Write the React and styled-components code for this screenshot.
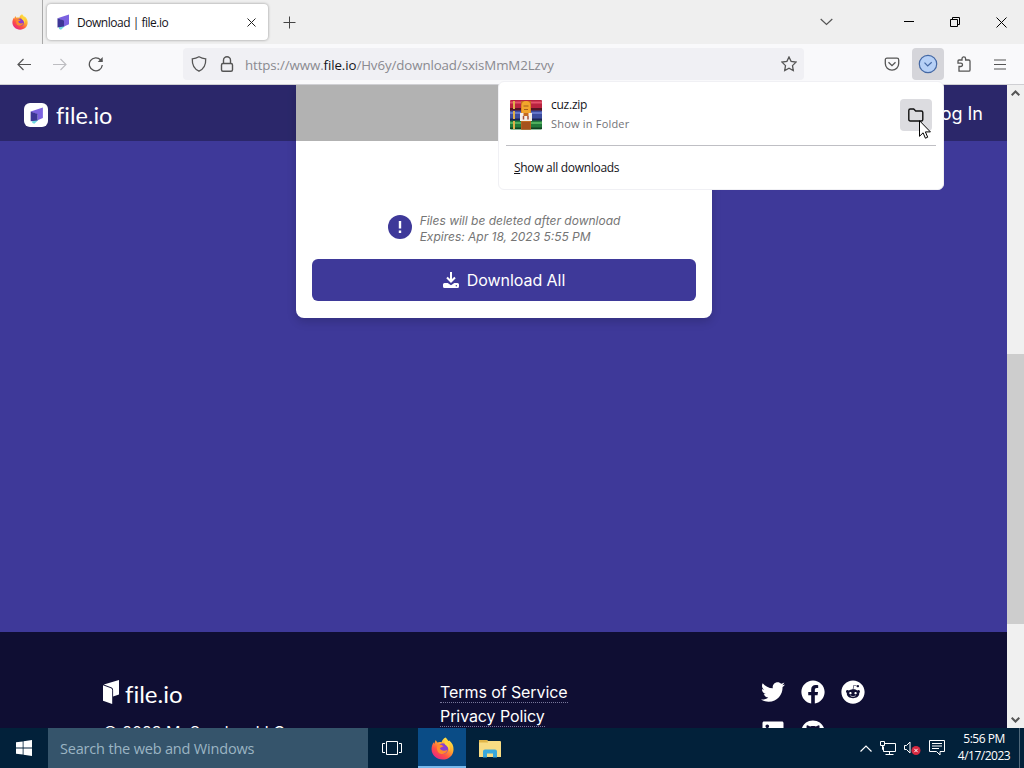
import React from 'react';
import styled, { createGlobalStyle } from 'styled-components';
import { FaTwitter, FaFacebook, FaReddit, FaLinkedin, FaGithub } from 'react-icons/fa';

function FirefoxIcon({ size }) {
  return (
    <svg width={size} height={size} viewBox="0 0 24 24">
      <defs>
        <linearGradient id="flame" x1="0.85" y1="0.05" x2="0.2" y2="0.95">
          <stop offset="0" stopColor="#fff04a" />
          <stop offset="0.4" stopColor="#ffa52f" />
          <stop offset="0.7" stopColor="#ff4f45" />
          <stop offset="1" stopColor="#e52686" />
        </linearGradient>
      </defs>
      <path
        d="M15.2 0.5c1.2 1.1 2.2 2.2 2.8 3.8l1.1-.7c3 2.6 4.6 5.6 4.4 9.6-.2 6-5 10.3-11.3 10.3C5.6 23.5.7 19 .6 12.8c0-2.8.8-5.2 2.2-7.3l.5 1.8 1.6-4.2 1.7 2.7c1.4-.6 3-.7 4.400-.2.6-2.200 2.100-4.200 4.200-5.100z"
        fill="url(#flame)"
      />
      <circle cx="12.3" cy="12.2" r="5.6" fill="#8a3fd0" />
      <path d="M7 8.2c2.200-1 4.600.1 6.200 1.600-2 .1-2.700 1.200-4 1.600 1 2.800 4.500 3.900 8 1.800-1 3.400-3.700 5-6.700 4.500C6.700 17.100 5 12.400 7 8.200z" fill="#ff8b2c" />
      <path d="M14.4 3.5c3.800 2.500 6.400 5.900 4.800 11.300-.5-3.400-2.200-5.600-4.600-7.100-.7-1.500-.7-2.800-.2-4.200z" fill="#ffd63d" />
    </svg>
  );
}

function FileIoMark({ size }) {
  return (
    <svg width={size} height={size} viewBox="0 0 16 16">
      <path d="M4 11l6 1-4 3.800L4 15z" fill="#6fd8df" />
      <path d="M2.500 4.200 14 .5v9.800l-5 2.200V7z" fill="#7b62e0" />
      <path d="M2.500 4.200 9 6.600v6L2.500 13.500z" fill="#3d3696" />
    </svg>
  );
}

function WinrarIcon() {
  return (
    <svg width="32" height="30" viewBox="0 0 32 30">
      <rect y="0" width="32" height="9.5" rx="1" fill="#b92340" />
      <rect y="1.5" width="32" height="2" fill="#e4526a" />
      <rect y="8" width="32" height="3" fill="#571523" />
      <rect y="10.5" width="32" height="9" rx="1" fill="#3c4c9e" />
      <rect y="12" width="32" height="2" fill="#6475c9" />
      <rect y="18.5" width="32" height="2.5" fill="#1c2453" />
      <rect y="20.5" width="32" height="9" rx="1" fill="#217a3a" />
      <rect y="22" width="32" height="2" fill="#4fae5c" />
      <rect y="27.5" width="32" height="1.5" fill="#113f20" />
      <path d="M3 1h2v8H3zM3 11h2v8H3zM3 21h2v8H3z" fill="#e0b04a" />
      <path d="M11 1h10v28.500h-10z" fill="#c46a20" />
      <path d="M11.500 13V5.500q0-4.500 4.500-4.500t4.500 4.500V13z" fill="#f2a52c" />
      <path d="M13.500 6h5M14 9.500h4" stroke="#a35c1a" strokeWidth="1" />
      <path d="M10 13h3.500v3h5v-3H22v8H10z" fill="#f5f0ea" />
      <path d="M13.500 16v3.500M18 16v3.500" stroke="#a8503a" strokeWidth="1.500" />
      <rect x="11.5" y="22" width="9" height="7.5" fill="#a5521d" />
    </svg>
  );
}

function App() {
  return (
    <Screen>
      <GlobalStyle />
      <TabBar>
        <PinnedTab>
          <FirefoxIcon size={16} />
        </PinnedTab>
        <Tab>
          <FileIoMark size={16} />
          <TabTitle>Download | file.io</TabTitle>
          <Line width="9" height="9" viewBox="0 0 9 9" $color="#222">
            <path d="M.5.5l8 8M8.500.5l-8 8" />
          </Line>
        </Tab>
        <NewTab>
          <Line width="13" height="13" viewBox="0 0 13 13" $color="#444">
            <path d="M6.500.5v12M.5 6.500h12" />
          </Line>
        </NewTab>
        <WindowControls>
          <Line width="13" height="8" viewBox="0 0 13 8" $color="#555" $stroke={1.2}>
            <path d="M.7 1l5.800 5.500L12.300 1" />
          </Line>
          <Line width="10" height="10" viewBox="0 0 10 10" $color="#000">
            <path d="M0 4.500h10" />
          </Line>
          <Line width="10" height="10" viewBox="0 0 10 10" $color="#000">
            <path d="M.5 2.500h7v7h-7zM2.500 2.500v-2h7v7h-2" />
          </Line>
          <Line width="11" height="11" viewBox="0 0 11 11" $color="#000">
            <path d="M.5.5l10 10M10.500.5l-10 10" />
          </Line>
        </WindowControls>
      </TabBar>

      <Toolbar>
        <NavButtons>
          <Line width="16" height="16" viewBox="0 0 16 16" $color="#555" $stroke={1.2}>
            <path d="M15 8.500H1.500M7.500 3 2 8.500 7.500 14" />
          </Line>
          <Line width="16" height="16" viewBox="0 0 16 16" $color="#bdbdc1" $stroke={1.1}>
            <path d="M1 8.500h13.500M8.500 3 14 8.500 8.500 14" />
          </Line>
          <Line width="16" height="16" viewBox="0 0 16 16" $color="#555" $stroke={1.3}>
            <path d="M14.300 9A6.500 6.500 0 1 1 12.700 4L14.300 5.500" />
            <path d="M14.700 1v5H9.700z" fill="#555" stroke="none" />
          </Line>
        </NavButtons>
        <UrlBar>
          <Line width="16" height="16" viewBox="0 0 16 16" $color="#555" $stroke={1.3}>
            <path d="M8 .8C5.800 2.100 3.700 2.700 1.300 2.900 1 8.500 3 12.900 8 15.200c5-2.300 7-6.700 6.700-12.300C12.300 2.700 10.200 2.100 8 .8z" />
          </Line>
          <Line width="16" height="16" viewBox="0 0 16 16" $color="#555" $stroke={1.4}>
            <rect x="2.5" y="7.5" width="11" height="7.7" rx="1.5" />
            <path d="M4.500 7.500V4.300a3.500 3.500 0 0 1 7 0v3.200" />
          </Line>
          <Url>
            https://www.<b>file.io</b>/Hv6y/download/sxisMmM2Lzvy
          </Url>
          <Line width="16" height="16" viewBox="0 0 16 16" $color="#555" $stroke={1.3}>
            <path d="M8 1l2.100 4.400 4.900.7-3.500 3.500.8 5L8 12.200l-4.300 2.400.8-5L1 6.100l4.900-.7z" />
          </Line>
        </UrlBar>
        <ToolbarActions>
          <Action>
            <Line width="16" height="16" viewBox="0 0 16 16" $color="#555" $stroke={1.3}>
              <path d="M3 2.200h10q1.700 0 1.700 1.700v3.600a6.700 6.700 0 0 1-13.400 0V3.900Q1.300 2.200 3 2.200zM4.500 6.300 8 9.700l3.500-3.400" />
            </Line>
          </Action>
          <Action $active>
            <Line width="20" height="20" viewBox="0 0 20 20" $color="#4468a4" $stroke={1.2}>
              <circle cx="10" cy="10" r="8.7" fill="#b6d0f6" />
              <path d="M6.500 8.700 9.700 12l4-3.700" />
            </Line>
          </Action>
          <Action>
            <Line width="16" height="16" viewBox="0 0 16 16" $color="#555" $stroke={1.3}>
              <path d="M3 15.200V10.500h1.800a1.700 1.700 0 0 0 0-3.400H2V5q0-1 1-1h3V2.700a1.700 1.700 0 0 1 3.600 0V4h3.200q1.200 0 1.200 1.200v8.800q0 1.200-1.200 1.200z" />
            </Line>
          </Action>
          <Action>
            <Line width="13" height="11" viewBox="0 0 13 11" $color="#555" $stroke={1.1}>
              <path d="M0 1h12M0 5.500h12M0 10h12" />
            </Line>
          </Action>
        </ToolbarActions>
      </Toolbar>

      <Viewport>
        <Page>
          <Main>
            <Card>
              <Notice>
                <svg width="24" height="24" viewBox="0 0 24 24">
                  <circle cx="12" cy="12" r="12" fill="#3e3999" />
                  <path d="M12 6v7.500M12 15.500v2.500" stroke="#fff" strokeWidth="2.400" />
                </svg>
                <NoticeText>
                  Files will be deleted after download
                  <br />
                  Expires: Apr 18, 2023 5:55 PM
                </NoticeText>
              </Notice>
              <DownloadButton>
                <svg width="16" height="16" viewBox="0 0 16 16" fill="none">
                  <path d="M8 0v9M4 5.500l4 4 4-4" stroke="#fff" strokeWidth="2" />
                  <path d="M1.500 11h3.200L8 13.300l3.300-2.300h3.200q1.500 0 1.500 1.500v2q0 1.500-1.500 1.500h-13Q0 16 0 14.500v-2Q0 11 1.500 11z" fill="#fff" />
                  <circle cx="13.3" cy="13.7" r=".7" fill="#3e3999" />
                </svg>
                Download All
              </DownloadButton>
            </Card>
          </Main>
          <Footer>
            <FooterBrand>
              <FooterLogo>
                <svg width="16" height="24" viewBox="0 0 16 24" fill="#fff">
                  <path d="M0 5.300 8 8.300q1.200.5 1.200 2V24L0 20.800z" />
                  <path d="M.8 4.600 16 0v14.500L10.100 16.500V10q0-1.900-1.400-2.500z" />
                </svg>
                <Wordmark $large>file.io</Wordmark>
              </FooterLogo>
              <Copyright>© 2023 McSendus, LLC</Copyright>
            </FooterBrand>
            <FooterLinks>
              <FooterLink>Terms of Service</FooterLink>
              <FooterLink>Privacy Policy</FooterLink>
            </FooterLinks>
            <Socials>
              <FaTwitter />
              <FaFacebook />
              <FaReddit />
              <FaLinkedin />
              <FaGithub />
            </Socials>
          </Footer>
          <SiteHeader>
            <Brand>
              <BrandBadge>
                <FileIoMark size={17} />
              </BrandBadge>
              <Wordmark>file.io</Wordmark>
            </Brand>
            <LogIn>Log In</LogIn>
          </SiteHeader>
        </Page>
        <Scrollbar>
          <Line width="9" height="6" viewBox="0 0 9 6" $color="#555" $stroke={2}>
            <path d="M.7 5.300l3.800-3.800 3.800 3.800" />
          </Line>
          <Thumb />
          <Line width="9" height="6" viewBox="0 0 9 6" $color="#555" $stroke={2}>
            <path d="M.7.7l3.800 3.800L8.300.7" />
          </Line>
        </Scrollbar>
      </Viewport>

      <DownloadsPanel>
        <DownloadItem>
          <WinrarIcon />
          <DownloadInfo>
            <FileName>cuz.zip</FileName>
            <FileStatus>Show in Folder</FileStatus>
          </DownloadInfo>
          <FolderButton>
            <Line width="16" height="16" viewBox="0 0 16 16" $color="#111" $stroke={1.4}>
              <path d="M2.300 2h3.400l2 2h5.600q1.500 0 1.500 1.500v7q0 1.500-1.500 1.500H2.300Q.8 14 .8 12.500v-9Q.8 2 2.300 2z" />
            </Line>
          </FolderButton>
        </DownloadItem>
        <ShowAll>
          <u>S</u>how all downloads
        </ShowAll>
      </DownloadsPanel>
      <Cursor width="12" height="19" viewBox="0 0 12 19">
        <path d="M.5.7v15.600l3.600-3.500 2.300 5.400 2.300-1-2.300-5.300h5z" fill="#fff" stroke="#000" />
      </Cursor>

      <Taskbar>
        <TaskButton>
          <svg width="16" height="16" viewBox="0 0 16 16" fill="#fff">
            <path d="M0 2.300 6.700 1.400v6.200H0zM7.500 1.300 16 0v7.600H7.500zM0 8.400h6.700v6.200L0 13.700zM7.500 8.400H16V16l-8.500-1.300z" />
          </svg>
        </TaskButton>
        <TaskSearch>Search the web and Windows</TaskSearch>
        <TaskButton>
          <Line width="20" height="14" viewBox="0 0 20 14" $color="#fff">
            <path d="M4.500.5h11v13h-11zM3 2.500H.5v9H3M17 2.500h2.500v9H17" />
          </Line>
        </TaskButton>
        <TaskButton $active>
          <FirefoxIcon size={23} />
        </TaskButton>
        <TaskButton>
          <svg width="22" height="19" viewBox="0 0 22 19">
            <path d="M0 1h8l1 1h12q1 0 1 1v15H0z" fill="#f8dc83" />
            <path d="M0 1h8l1 2.500H0z" fill="#e0b549" />
            <path d="M4 18.500v-6q0-2 2-2h10q2 0 2 2v6h-4v-4H8v4z" fill="#38a8dc" />
          </svg>
        </TaskButton>
        <Tray>
          <Line width="12" height="7" viewBox="0 0 12 7" $color="#fff" $stroke={1.2}>
            <path d="M.5 6.500 6 1l5.500 5.500" />
          </Line>
          <Line width="16" height="14" viewBox="0 0 16 14" $color="#fff">
            <path d="M5 2.500h10.500v8H3.500v-5M9.500 10.500v3M5.500 13.500h8M.5.5h4v4h-4zM2.500 4.500v4h1" />
          </Line>
          <Line width="17" height="14" viewBox="0 0 17 14" $color="#fff">
            <path d="M.5 4.500h2l3.500-3.500v11L2.500 8.500h-2z" />
            <circle cx="12" cy="9.5" r="4.5" fill="#d8283f" stroke="none" />
            <path d="M10.300 7.800l3.400 3.400M13.700 7.800l-3.400 3.400" />
          </Line>
          <Line width="16" height="16" viewBox="0 0 16 16" $color="#fff">
            <path d="M.5.5h15v11h-4.500v3.500l-3.500-3.500h-7zM3 3.500h10M3 6h10M3 8.500h7" />
          </Line>
          <Clock>
            <span>5:56 PM</span>
            <span>4/17/2023</span>
          </Clock>
          <ShowDesktop />
        </Tray>
      </Taskbar>
    </Screen>
  );
}

export default App;

const GlobalStyle = createGlobalStyle`
  * {
    box-sizing: border-box;
  }
  body {
    margin: 0;
    overflow: hidden;
    font-family: 'Open Sans', 'Noto Sans', sans-serif;
  }
  svg {
    display: block;
    flex-shrink: 0;
  }
`;

const Screen = styled.div`
  position: relative;
  display: flex;
  flex-direction: column;
  width: 1024px;
  height: 768px;
  overflow: hidden;
`;

const Line = styled.svg`
  fill: none;
  stroke: ${({ $color }) => $color};
  stroke-width: ${({ $stroke }) => $stroke || 1};
`;

const TabBar = styled.div`
  display: flex;
  height: 44px;
  background: #efefef;
`;

const PinnedTab = styled.div`
  display: flex;
  align-items: center;
  justify-content: center;
  width: 43px;
  padding-right: 3px;
  border-right: 1px solid #a9a9a9;
`;

const Tab = styled.div`
  display: flex;
  align-items: center;
  width: 221px;
  height: 36px;
  margin: 4px 0 0 4px;
  padding: 0 12px 0 8px;
  background: #fff;
  border-radius: 4px;
  box-shadow: 0 0 3px rgba(0, 0, 0, 0.4);
`;

const TabTitle = styled.span`
  flex: 1;
  margin-left: 6px;
  padding-top: 1px;
  color: #15141a;
  font-size: 12px;
  letter-spacing: -0.48px;
  white-space: nowrap;
`;

const NewTab = styled.div`
  display: flex;
  align-items: center;
  margin-left: 15px;
`;

const WindowControls = styled.div`
  display: flex;
  align-items: center;
  gap: 36px;
  margin-left: auto;
  margin-right: 17px;

  svg:first-child {
    margin-right: 35px;
  }
`;

const Toolbar = styled.div`
  display: flex;
  align-items: center;
  height: 41px;
  background: #f9f9fb;
  border-bottom: 1px solid #cfcfd3;
`;

const NavButtons = styled.div`
  display: flex;
  gap: 20px;
  width: 183px;
  padding-left: 16px;
`;

const UrlBar = styled.div`
  display: flex;
  align-items: center;
  width: 621px;
  height: 32px;
  padding: 0 7px 0 8px;
  background: #f0f0f4;
  border-radius: 4px;

  svg + svg {
    margin-left: 12px;
  }
`;

const Url = styled.span`
  flex: 1;
  margin-left: 10px;
  padding-top: 2px;
  color: #8a8a90;
  font-size: 13.3px;
  letter-spacing: -0.1px;
  white-space: nowrap;

  b {
    color: #15141a;
    font-weight: 400;
  }
`;

const ToolbarActions = styled.div`
  display: flex;
  gap: 4px;
  margin-left: auto;
  margin-right: 8px;
`;

const Action = styled.div`
  display: flex;
  align-items: center;
  justify-content: center;
  width: 32px;
  height: 32px;
  border-radius: 4px;
  background: ${({ $active }) => ($active ? '#d5d5da' : 'transparent')};
`;

const Viewport = styled.div`
  display: flex;
  height: 643px;
`;

const Page = styled.div`
  position: relative;
  width: 1007px;
  height: 643px;
  overflow: hidden;
  font-family: Inter, sans-serif;
`;

const SiteHeader = styled.header`
  position: absolute;
  top: 0;
  left: 0;
  display: flex;
  align-items: center;
  justify-content: space-between;
  width: 100%;
  height: 56px;
  padding: 0 24px;
  background: rgba(0, 0, 0, 0.3);
  color: #fff;
`;

const Brand = styled.div`
  display: flex;
  align-items: center;
  gap: 8px;
  padding-top: 4px;
`;

const BrandBadge = styled.div`
  display: flex;
  align-items: center;
  justify-content: center;
  width: 24px;
  height: 24px;
  background: #fff;
  border-radius: 6px;
`;

const Wordmark = styled.span`
  color: #fff;
  font-family: Lato, sans-serif;
  font-size: ${({ $large }) => ($large ? '24px' : '23.5px')};
  font-variant-ligatures: none;
  line-height: ${({ $large }) => ($large ? '27px' : '26px')};
`;

const LogIn = styled.span`
  font-size: 18px;
`;

const Main = styled.main`
  display: flex;
  justify-content: center;
  height: 547px;
  padding-left: 1px;
  background: #3e3999;
`;

const Card = styled.section`
  display: flex;
  flex-direction: column;
  justify-content: flex-end;
  align-items: center;
  width: 416px;
  height: 233px;
  padding: 0 16px 17px;
  background: #fff;
  border-radius: 0 0 8px 8px;
  box-shadow: 0 4px 10px rgba(0, 0, 0, 0.16);
`;

const Notice = styled.div`
  display: flex;
  align-items: center;
  gap: 8px;
  margin-bottom: 14px;
`;

const NoticeText = styled.p`
  margin: 0;
  padding-top: 4px;
  color: #757575;
  font-size: 12px;
  font-style: italic;
  line-height: 16px;
  white-space: nowrap;
`;

const DownloadButton = styled.button`
  display: flex;
  align-items: center;
  justify-content: center;
  gap: 8px;
  width: 100%;
  height: 42px;
  border: 0;
  border-radius: 6px;
  background: #3e3999;
  color: #fff;
  font-family: Inter, sans-serif;
  font-size: 16px;
  letter-spacing: -0.05px;
`;

const Footer = styled.footer`
  display: flex;
  height: 96px;
  padding: 48px 0 0 103px;
  overflow: hidden;
  background: #0f0e33;
  color: #fff;
`;

const FooterBrand = styled.div`
  width: 337px;
`;

const FooterLogo = styled.div`
  display: flex;
  gap: 6px;
`;

const Copyright = styled.div`
  margin-top: 13px;
  font-size: 16px;
  line-height: 24px;
`;

const FooterLinks = styled.div`
  display: flex;
  flex-direction: column;
  align-items: flex-start;
  width: 318px;
`;

const FooterLink = styled.a`
  height: 23px;
  margin-bottom: 1px;
  border-bottom: 1px dotted #77769a;
  font-size: 16px;
  letter-spacing: -0.08px;
  line-height: 25px;
`;

const Socials = styled.div`
  display: grid;
  grid-template-columns: repeat(3, 24px);
  gap: 16px;
  align-content: start;
  padding-left: 3px;
  font-size: 24px;
`;

const Scrollbar = styled.div`
  display: flex;
  flex-direction: column;
  align-items: center;
  justify-content: space-between;
  width: 17px;
  padding: 5px 0;
  background: #f0f0f0;
`;

const Thumb = styled.div`
  width: 17px;
  height: 270px;
  margin-top: 164px;
  background: #cdcdcd;
`;

const DownloadsPanel = styled.div`
  position: absolute;
  top: 81px;
  left: 498px;
  width: 446px;
  height: 109px;
  padding: 0 7px;
  background: #fff;
  border: 1px solid #f0f0f4;
  border-radius: 6px;
`;

const DownloadItem = styled.div`
  display: flex;
  align-items: center;
  height: 64px;
  padding: 3px 4px 0;
  border-bottom: 1px solid #bfbfc4;
`;

const DownloadInfo = styled.div`
  display: flex;
  flex: 1;
  flex-direction: column;
  margin-left: 9px;
  padding-bottom: 2px;
  line-height: 19px;
`;

const FileName = styled.span`
  color: #15141a;
  font-size: 12px;
  letter-spacing: -0.25px;
`;

const FileStatus = styled.span`
  color: #737378;
  font-size: 11px;
  letter-spacing: 0.2px;
`;

const FolderButton = styled.div`
  display: flex;
  align-items: center;
  justify-content: center;
  width: 32px;
  height: 32px;
  background: #dcdce0;
  border-radius: 4px;
`;

const ShowAll = styled.div`
  padding-left: 8px;
  color: #15141a;
  font-size: 12px;
  letter-spacing: -0.3px;
  line-height: 43px;
`;

const Cursor = styled.svg`
  position: absolute;
  top: 120px;
  left: 919px;
`;

const Taskbar = styled.div`
  display: flex;
  height: 40px;
  background: #02213a;
`;

const TaskButton = styled.div`
  display: flex;
  align-items: center;
  justify-content: center;
  width: 48px;
  margin-left: ${({ $active }) => ($active ? '2px' : '0')};
  background: ${({ $active }) => ($active ? '#0a4c86' : 'transparent')};
  box-shadow: ${({ $active }) => ($active ? 'inset 0 -2px #76b9ed' : 'none')};
`;

const TaskSearch = styled.div`
  width: 320px;
  padding-left: 12px;
  background: #35546b;
  color: #9bb4c3;
  font-size: 14.5px;
  letter-spacing: -0.18px;
  line-height: 41px;
`;

const Tray = styled.div`
  display: flex;
  align-items: center;
  gap: 8px;
  margin-left: auto;
`;

const Clock = styled.div`
  display: flex;
  flex-direction: column;
  align-items: center;
  width: 54px;
  margin-left: 4px;
  padding-bottom: 2px;
  color: #fff;
  font-size: 12px;
  letter-spacing: -0.5px;
  line-height: 17px;
`;

const ShowDesktop = styled.div`
  width: 5px;
  height: 40px;
  border-left: 1px solid #50687a;
`;
